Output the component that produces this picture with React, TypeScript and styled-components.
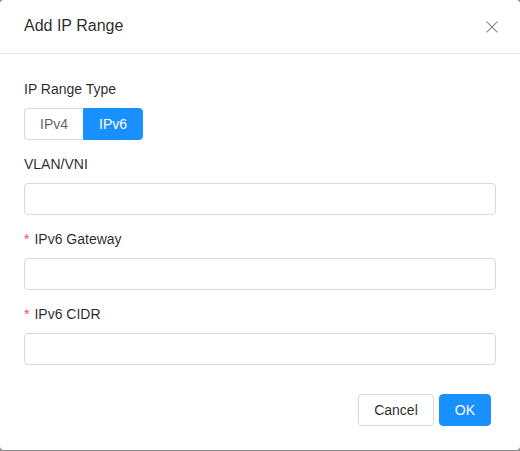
import { createGlobalStyle, styled } from "styled-components";

const GlobalStyle = createGlobalStyle`
    html, body {
        margin: 0;
        padding: 0;
        background: #8c8c8c;
    }
    body {
        font-family: "Liberation Sans", Arial, sans-serif;
        font-size: 14px;
        color: rgba(0, 0, 0, 0.85);
    }
    * {
        box-sizing: border-box;
    }
`

type FieldProps = {
    label: string,
    required?: boolean
}

const Field = ({ label, required }: FieldProps) => {
    return (
        <FormItem>
            <Label>
                {required && <Star>*</Star>}
                {label}
            </Label>
            <Input type="text" />
        </FormItem>
    )
}

const CloseIcon = () => (
    <svg width="12" height="12" viewBox="0 0 12 12" fill="none">
        <path d="M0.6 0.6 L11.4 11.4 M11.4 0.6 L0.6 11.4" stroke="#8c8c8c" strokeWidth="1.3" />
    </svg>
)

const App = () => {
    return (
        <>
            <GlobalStyle />
            <Modal>
                <Header>
                    <Title>Add IP Range</Title>
                    <CloseButton aria-label="Close">
                        <CloseIcon />
                    </CloseButton>
                </Header>
                <Body>
                    <FormItem>
                        <Label>IP Range Type</Label>
                        <RadioGroup>
                            <RadioButton>IPv4</RadioButton>
                            <RadioButton $checked>IPv6</RadioButton>
                        </RadioGroup>
                    </FormItem>
                    <Field label="VLAN/VNI" />
                    <Field label="IPv6 Gateway" required />
                    <Field label="IPv6 CIDR" required />
                </Body>
                <Footer>
                    <Button>Cancel</Button>
                    <Button $primary>OK</Button>
                </Footer>
            </Modal>
        </>
    )
}

const Modal = styled.div`
    width: 520px;
    height: 450px;
    background: #fff;
    border-radius: 4px;
    display: flex;
    flex-direction: column;
    overflow: hidden;
`

const Header = styled.div`
    height: 54px;
    padding: 0 22px 0 24px;
    border-bottom: 1px solid #e8e8e8;
    display: flex;
    align-items: center;
    justify-content: space-between;
`

const Title = styled.div`
    font-size: 16px;
    line-height: 22px;
    color: rgba(0, 0, 0, 0.85);
    margin-top: -1px;
`

const CloseButton = styled.button`
    border: 0;
    background: transparent;
    padding: 0;
    width: 12px;
    height: 12px;
    display: flex;
    cursor: pointer;
`

const Body = styled.div`
    padding: 24px 24px 0;
    display: flex;
    flex-direction: column;
    gap: 13px;
`

const FormItem = styled.div`
    display: flex;
    flex-direction: column;
    align-items: flex-start;
`

const Label = styled.label`
    line-height: 22px;
    padding-bottom: 8px;
    color: rgba(0, 0, 0, 0.85);
`

const Star = styled.span`
    color: #ff4d4f;
    margin-right: 5px;
    font-size: 14px;
`

const Input = styled.input`
    width: 100%;
    height: 32px;
    border: 1px solid #d9d9d9;
    border-radius: 4px;
    padding: 4px 11px;
    font: inherit;
    outline: none;
    background: #fff;
`

const RadioGroup = styled.div`
    display: flex;
`

const RadioButton = styled.button<{ $checked?: boolean }>`
    height: 32px;
    padding: 0 15px;
    font: inherit;
    line-height: 30px;
    border: 1px solid ${p => p.$checked ? "#1890ff" : "#d9d9d9"};
    background: ${p => p.$checked ? "#1890ff" : "#fff"};
    color: ${p => p.$checked ? "#fff" : "rgba(0, 0, 0, 0.65)"};
    cursor: pointer;

    &:first-child {
        border-radius: 4px 0 0 4px;
        border-right: 0;
    }
    &:last-child {
        border-radius: 0 4px 4px 0;
        width: 60px;
    }
`

const Footer = styled.div`
    margin-top: auto;
    padding: 0 29px 24px 24px;
    display: flex;
    justify-content: flex-end;
    gap: 5px;
`

const Button = styled.button<{ $primary?: boolean }>`
    height: 32px;
    padding: 0 15px;
    font: inherit;
    border-radius: 4px;
    border: 1px solid ${p => p.$primary ? "#1890ff" : "#d9d9d9"};
    background: ${p => p.$primary ? "#1890ff" : "#fff"};
    color: ${p => p.$primary ? "#fff" : "rgba(0, 0, 0, 0.85)"};
    cursor: pointer;
`

export default App;
